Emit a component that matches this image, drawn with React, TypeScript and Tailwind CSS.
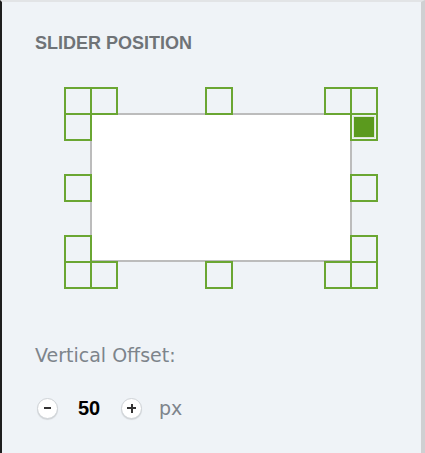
import React, { useState } from 'react';

type Spot = { x: number; y: number; id: string };

// square positions inside the picker, 26px pitch with shared 2px borders
const spots: Spot[] = [
  { x: 0, y: 0, id: 'tl-1' },
  { x: 26, y: 0, id: 'tl-2' },
  { x: 141, y: 0, id: 'tc' },
  { x: 260, y: 0, id: 'tr-1' },
  { x: 286, y: 0, id: 'tr-2' },
  { x: 0, y: 26, id: 'tl-3' },
  { x: 286, y: 26, id: 'tr-3' },
  { x: 0, y: 87, id: 'ml' },
  { x: 286, y: 87, id: 'mr' },
  { x: 0, y: 148, id: 'bl-3' },
  { x: 286, y: 148, id: 'br-3' },
  { x: 0, y: 174, id: 'bl-1' },
  { x: 26, y: 174, id: 'bl-2' },
  { x: 141, y: 174, id: 'bc' },
  { x: 260, y: 174, id: 'br-1' },
  { x: 286, y: 174, id: 'br-2' },
];

const App: React.FC = () => {
  const [selected, setSelected] = useState('tr-3');
  const [offset, setOffset] = useState(50);

  return (
    <div className="w-[425px] h-[453px] bg-[#eff3f7] border-l-2 border-l-[#1e1e1e] border-t-2 border-t-[#e2e4e6] border-r-4 border-r-[#cfd0d2] pl-[33px] pt-[32px] overflow-hidden">
      <h2 className="text-[18px] leading-[18px] font-bold text-[#6f7377] font-['Liberation_Sans',Arial,sans-serif]">
        SLIDER POSITION
      </h2>

      <div className="relative w-[314px] h-[201px] ml-[29px] mt-[35px]">
        <div className="absolute left-[26px] top-[26px] w-[262px] h-[149px] bg-white border-2 border-[#bcbcbc]" />
        {spots.map((s) => (
          <button
            key={s.id}
            type="button"
            onClick={() => setSelected(s.id)}
            className="absolute w-[28px] h-[28px] border-2 border-[#6aa632] p-px"
            style={{ left: s.x, top: s.y }}
          >
            {selected === s.id && (
              <div className="w-full h-full bg-[#dde7d4] p-px">
                <div className="w-full h-full bg-[#5b9a1e]" />
              </div>
            )}
          </button>
        ))}
      </div>

      <div className="mt-[58px] text-[19px] leading-[19px] text-[#7d848b] font-['DejaVu_Sans',sans-serif]">
        Vertical Offset:
      </div>

      <div className="flex items-center h-[22px] mt-[32px] ml-[2px]">
        <button
          type="button"
          onClick={() => setOffset((v) => v - 1)}
          className="w-[21px] h-[21px] rounded-full bg-white border border-[#cfd3d7] shadow-[0_1px_1px_rgba(0,0,0,0.12)] flex items-center justify-center"
        >
          <span className="block w-[7px] h-[2px] bg-[#333]" />
        </button>
        <span className="ml-[20px] w-[24px] text-[20px] leading-[22px] font-bold text-black font-['Liberation_Sans',Arial,sans-serif]">
          {offset}
        </span>
        <button
          type="button"
          onClick={() => setOffset((v) => v + 1)}
          className="ml-[19px] w-[21px] h-[21px] rounded-full bg-white border border-[#cfd3d7] shadow-[0_1px_1px_rgba(0,0,0,0.12)] flex items-center justify-center relative"
        >
          <span className="block w-[9px] h-[2px] bg-[#333]" />
          <span className="absolute w-[2px] h-[9px] bg-[#333]" />
        </button>
        <span className="ml-[17px] text-[19px] leading-[22px] text-[#7d848b] font-['DejaVu_Sans',sans-serif]">
          px
        </span>
      </div>
    </div>
  );
};

export default App;
